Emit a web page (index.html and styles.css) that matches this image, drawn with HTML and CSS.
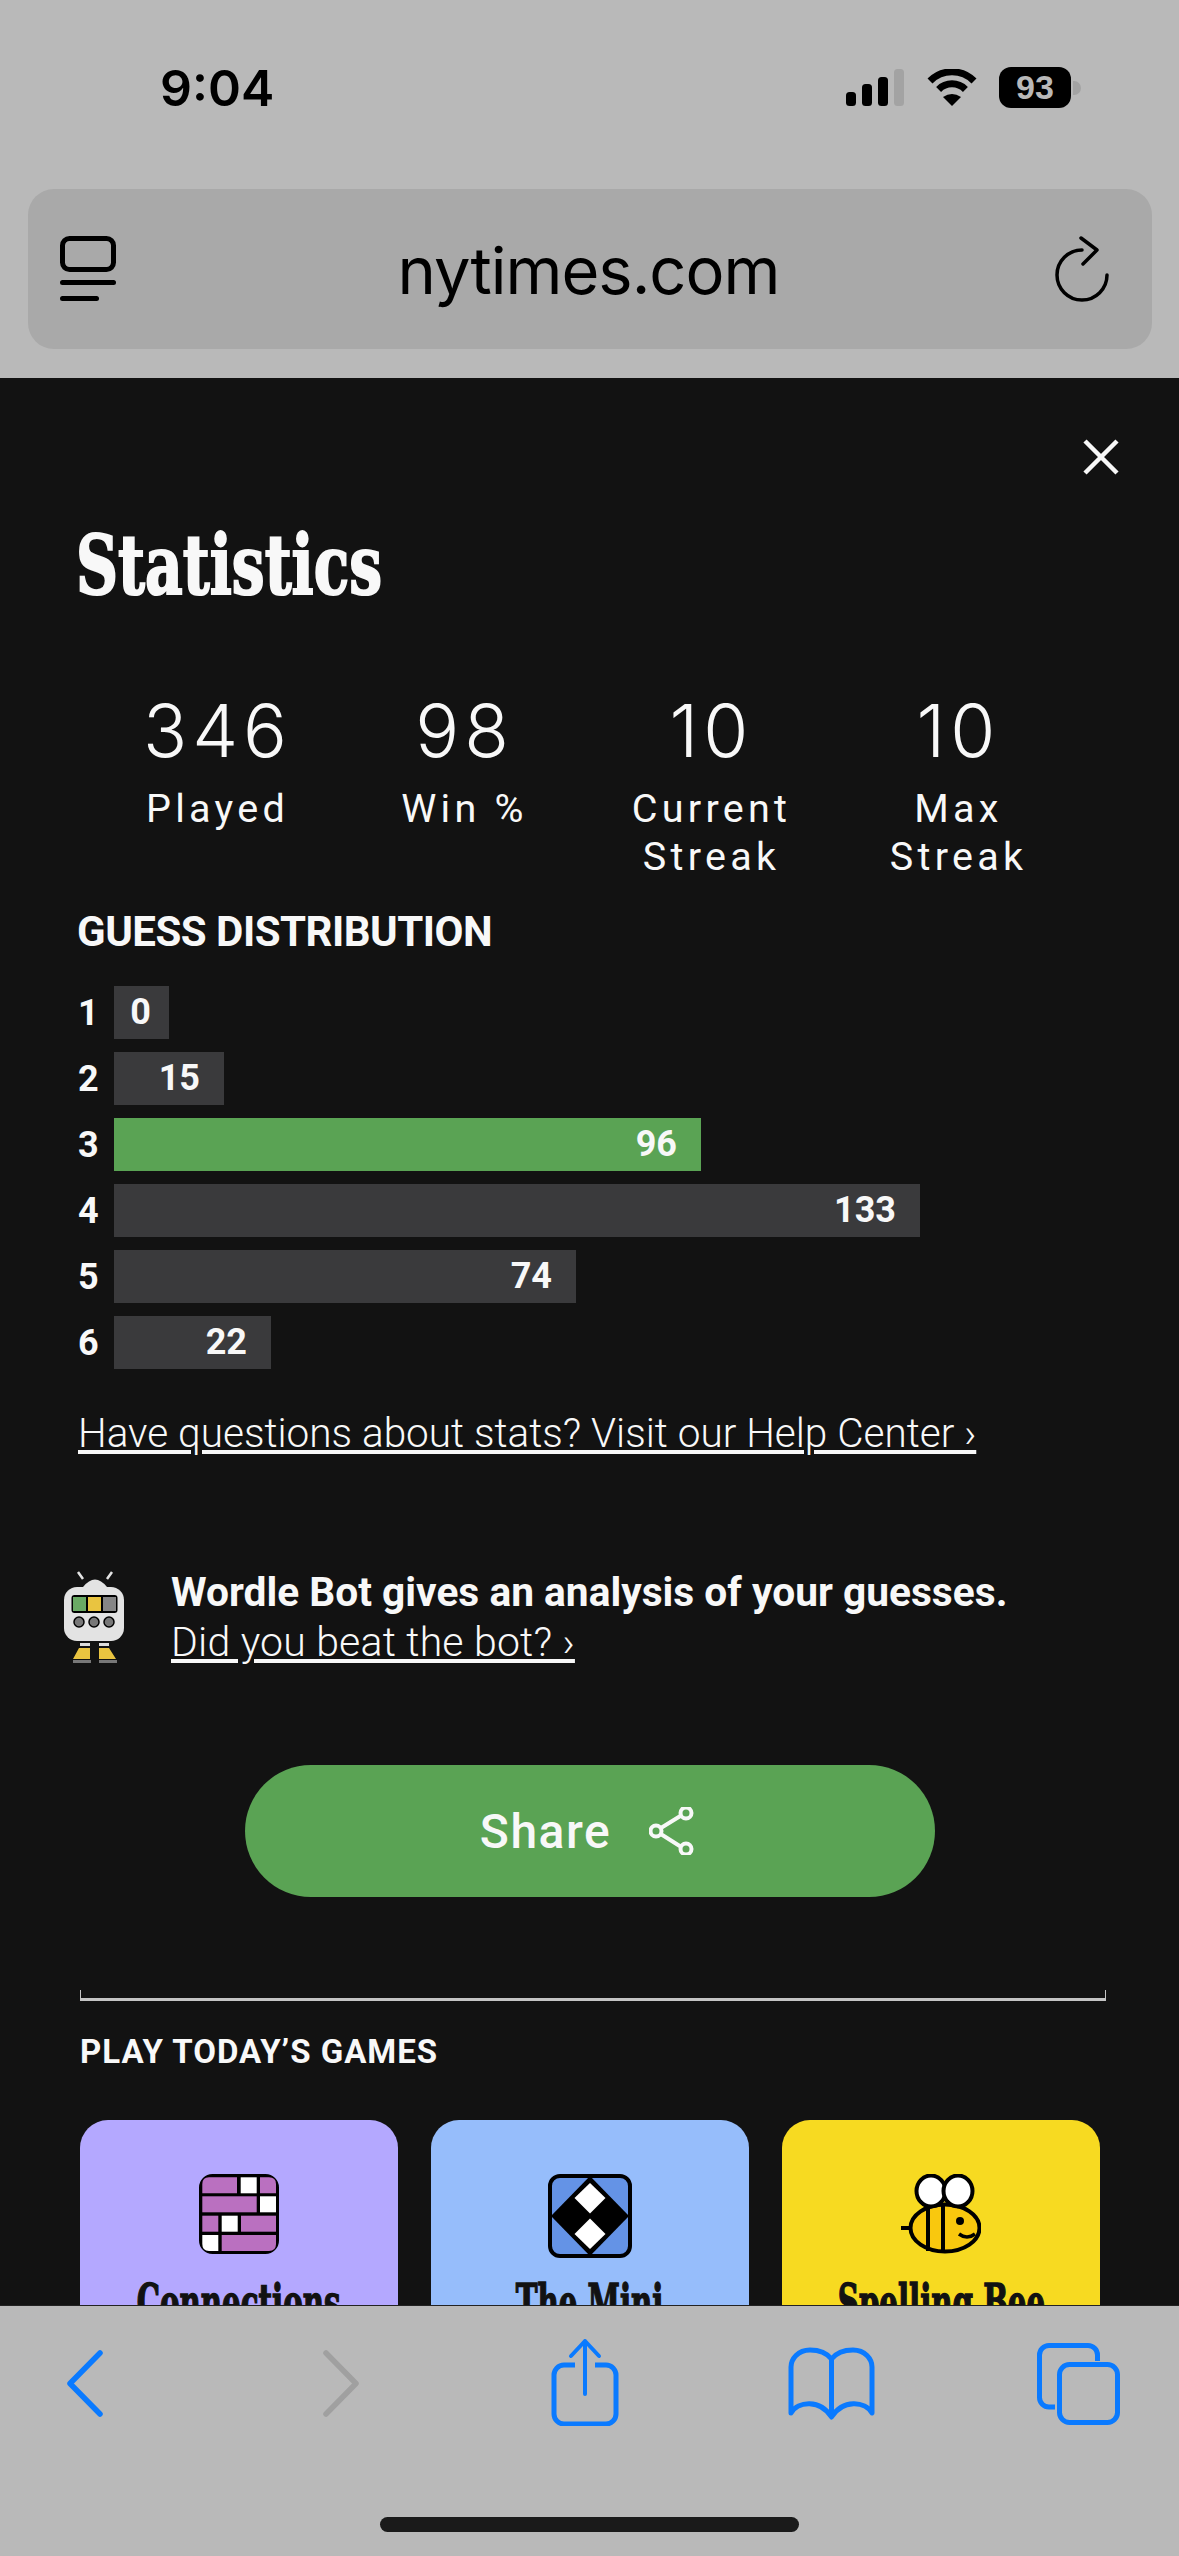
FILE: index.html
```html
<!DOCTYPE html>
<html lang="en">
<head>
  <meta charset="UTF-8" />
  <meta name="viewport" content="width=device-width, initial-scale=1.0"/>
  <title>Statistics</title>
  <link rel="stylesheet" href="styles.css">
</head>
<body>
  <div class="tela">
    <header class="topo">
      <div class="status">
        <span class="hora">9:04</span>
        <div class="status-icones">
          <svg width="58" height="37" viewBox="0 0 58 37">
            <rect x="0" y="23" width="10" height="14" rx="3.5" fill="#000"/>
            <rect x="16" y="15" width="10" height="22" rx="3.5" fill="#000"/>
            <rect x="32" y="8" width="10" height="29" rx="3.5" fill="#000"/>
            <rect x="48" y="0" width="10" height="37" rx="3.5" fill="#a3a3a3"/>
          </svg>
          <svg class="wifi" width="50" height="37" viewBox="0 0 50 37">
            <path d="M3 12 A31 31 0 0 1 47 12" fill="none" stroke="#000" stroke-width="7"/>
            <path d="M11.6 20.4 A19 19 0 0 1 38.4 20.4" fill="none" stroke="#000" stroke-width="7"/>
            <path d="M16 28 Q25 22 34 28 L25 37 Z" fill="#000"/>
          </svg>
          <div class="bateria">93</div>
          <div class="bateria-ponta"></div>
        </div>
      </div>
      <div class="barra-url">
        <svg width="56" height="66" viewBox="0 0 56 66">
          <rect x="2.5" y="2.5" width="51" height="31" rx="7" fill="none" stroke="#000" stroke-width="5"/>
          <rect x="0" y="44" width="56" height="5" rx="2.5" fill="#000"/>
          <rect x="0" y="60" width="39" height="5" rx="2.5" fill="#000"/>
        </svg>
        <span class="url">nytimes.com</span>
        <svg width="55" height="66" viewBox="0 0 55 66">
          <path d="M27 14 A25 25 0 1 0 52 39" fill="none" stroke="#000" stroke-width="3.5" stroke-linecap="round"/>
          <path d="M26 2 L42 14 L28 28" fill="none" stroke="#000" stroke-width="3.5" stroke-linecap="round" stroke-linejoin="round"/>
        </svg>
      </div>
    </header>

    <main class="conteudo">
      <div class="fechar-linha">
        <svg width="36" height="36" viewBox="0 0 36 36">
          <path d="M2 2 L34 34 M34 2 L2 34" stroke="#f8f8f8" stroke-width="4.5"/>
        </svg>
      </div>
      <h1 class="titulo">Statistics</h1>

      <div class="numeros">
        <div class="numero"><div class="valor">346</div><div class="rotulo">Played</div></div>
        <div class="numero"><div class="valor">98</div><div class="rotulo">Win %</div></div>
        <div class="numero"><div class="valor">10</div><div class="rotulo">Current<br>Streak</div></div>
        <div class="numero"><div class="valor">10</div><div class="rotulo">Max<br>Streak</div></div>
      </div>

      <h2 class="subtitulo">GUESS DISTRIBUTION</h2>
      <div class="grafico">
        <div class="linha"><span class="indice">1</span><div class="barra barra-zero" style="width:55px">0</div></div>
        <div class="linha"><span class="indice">2</span><div class="barra" style="width:110px">15</div></div>
        <div class="linha"><span class="indice">3</span><div class="barra verde" style="width:587px">96</div></div>
        <div class="linha"><span class="indice">4</span><div class="barra" style="width:806px">133</div></div>
        <div class="linha"><span class="indice">5</span><div class="barra" style="width:462px">74</div></div>
        <div class="linha"><span class="indice">6</span><div class="barra" style="width:157px">22</div></div>
      </div>

      <a class="ajuda" href="#">Have questions about stats? Visit our Help Center ›</a>

      <div class="bot">
        <svg class="bot-icone" width="66" height="93" viewBox="0 0 66 93">
          <path d="M16 1 L21 8 M50 1 L45 8" stroke="#e3e3e3" stroke-width="2.5"/>
          <path d="M21 16 Q33 1 45 16 Z" fill="#e3e3e3"/>
          <rect x="2" y="16" width="60" height="54" rx="13" fill="#e3e3e3"/>
          <rect x="9.5" y="24" width="46" height="18" rx="3" fill="#000"/>
          <rect x="11" y="26" width="13" height="14" fill="#6aaa64"/>
          <rect x="26" y="26" width="13" height="14" fill="#e9c440"/>
          <rect x="41" y="26" width="13" height="14" fill="#868686"/>
          <circle cx="17" cy="51" r="5" fill="#777" stroke="#000" stroke-width="1.5"/>
          <circle cx="32" cy="51" r="5" fill="#777" stroke="#000" stroke-width="1.5"/>
          <circle cx="47" cy="51" r="5" fill="#777" stroke="#000" stroke-width="1.5"/>
          <rect x="18" y="72" width="10" height="3" fill="#ddd"/>
          <rect x="37" y="72" width="10" height="3" fill="#ddd"/>
          <path d="M17 77 H28 V88 H11 Z M37 77 H47 L54 88 H37 Z" fill="#e9c440"/>
          <rect x="11" y="89" width="18" height="3" fill="#777"/>
          <rect x="37" y="89" width="18" height="3" fill="#777"/>
        </svg>
        <div class="bot-texto">
          <div class="bot-forte">Wordle Bot gives an analysis of your guesses.</div>
          <a class="bot-link" href="#">Did you beat the bot? ›</a>
        </div>
      </div>

      <button class="compartilhar">
        <span>Share</span>
        <svg width="45" height="48" viewBox="0 0 45 48">
          <path d="M37 5.5 L7 24 L37 43" fill="none" stroke="#f8f8f8" stroke-width="4"/>
          <circle cx="37" cy="6" r="5.5" fill="#5aa354" stroke="#f8f8f8" stroke-width="4"/>
          <circle cx="7" cy="24" r="5.5" fill="#5aa354" stroke="#f8f8f8" stroke-width="4"/>
          <circle cx="37" cy="42" r="5.5" fill="#5aa354" stroke="#f8f8f8" stroke-width="4"/>
        </svg>
      </button>

      <div class="divisor"></div>
      <h3 class="jogos-titulo">PLAY TODAY’S GAMES</h3>

      <div class="jogos">
        <div class="jogo roxo">
          <svg width="80" height="80" viewBox="0 0 80 80">
            <rect x="1.5" y="1.5" width="77" height="77" rx="12" fill="#000" stroke="#000" stroke-width="3"/>
            <path d="M10 3.3 H38 V19.3 H3.3 V10 Q3.3 3.3 10 3.3 Z" fill="#ba70c0"/>
            <rect x="41.7" y="3.3" width="16" height="16" fill="#fff"/>
            <path d="M61 3.3 H70 Q77 3.3 77 10 V19.3 H61 Z" fill="#ba70c0"/>
            <rect x="3.3" y="22.3" width="54.4" height="16" fill="#ba70c0"/>
            <rect x="61" y="22.3" width="16" height="16" fill="#fff"/>
            <rect x="3.3" y="41.7" width="16" height="16" fill="#ba70c0"/>
            <rect x="22.7" y="41.7" width="16" height="16" fill="#fff"/>
            <rect x="42" y="41.7" width="35" height="16" fill="#ba70c0"/>
            <path d="M3.3 61 H19.3 V77 H10 Q3.3 77 3.3 70 Z" fill="#fff"/>
            <path d="M22.7 61 H77 V70 Q77 77 70 77 H22.7 Z" fill="#ba70c0"/>
          </svg>
          <div class="jogo-nome">Connections</div>
        </div>
        <div class="jogo azul">
          <svg width="84" height="84" viewBox="0 0 84 84">
            <rect x="2" y="2" width="80" height="80" rx="10" fill="#6493e6" stroke="#000" stroke-width="4"/>
            <path d="M42 2 L81 42 L42 82 L3 42 Z" fill="#000"/>
            <path d="M42 9 L57.5 24 L42 39.5 L26.5 24 Z" fill="#fff"/>
            <path d="M42 44.5 L57.5 60 L42 75 L26.5 60 Z" fill="#fff"/>
          </svg>
          <div class="jogo-nome nome-mini">The Mini</div>
        </div>
        <div class="jogo amarelo">
          <svg width="80" height="80" viewBox="0 0 80 80">
            <path d="M0 54 H9" stroke="#000" stroke-width="4"/>
            <ellipse cx="44" cy="54" rx="34.5" ry="23.5" fill="#f9c80e" stroke="#000" stroke-width="4"/>
            <path d="M27 32 V77 M42 32 V77" stroke="#000" stroke-width="4"/>
            <ellipse cx="30" cy="17" rx="14.5" ry="15.5" fill="#fff" stroke="#000" stroke-width="4"/>
            <ellipse cx="57" cy="17" rx="14.5" ry="15.5" fill="#fff" stroke="#000" stroke-width="4"/>
            <circle cx="59" cy="47" r="4" fill="#000"/>
            <path d="M58 60 Q66 66 74 60" fill="none" stroke="#000" stroke-width="3.5"/>
          </svg>
          <div class="jogo-nome">Spelling Bee</div>
        </div>
      </div>
    </main>

    <footer class="rodape">
      <div class="ferramentas">
        <svg class="ic-voltar" width="37" height="67" viewBox="0 0 37 67">
          <path d="M34 3 L4 33.5 L34 64" fill="none" stroke="#0a7aff" stroke-width="5.5" stroke-linecap="round" stroke-linejoin="round"/>
        </svg>
        <svg class="ic-avancar" width="37" height="67" viewBox="0 0 37 67">
          <path d="M3 3 L33 33.5 L3 64" fill="none" stroke="#a0a0a0" stroke-width="5.5" stroke-linecap="round" stroke-linejoin="round"/>
        </svg>
        <svg class="ic-enviar" width="70" height="88" viewBox="0 0 70 88">
          <path d="M25 27 H14 A10 10 0 0 0 4 37 V76 A10 10 0 0 0 14 86 H56 A10 10 0 0 0 66 76 V37 A10 10 0 0 0 56 27 H45" fill="none" stroke="#0a7aff" stroke-width="5"/>
          <path d="M35 3 V56 M21 18 L35 3 L49 18" fill="none" stroke="#0a7aff" stroke-width="4" stroke-linecap="round" stroke-linejoin="round"/>
        </svg>
        <svg class="ic-livro" width="87" height="73" viewBox="0 0 87 73">
          <path d="M43.5 12 C38 5 30 3 22 3 C10 3 3 12 3 20 V66 C10 54 32 52 43.5 70 C55 52 77 54 84 66 V20 C84 12 77 3 65 3 C57 3 49 5 43.5 12 Z M43.5 12 V70" fill="none" stroke="#0a7aff" stroke-width="5" stroke-linejoin="round"/>
        </svg>
        <svg class="ic-abas" width="83" height="82" viewBox="0 0 83 82">
          <path d="M18 64 H12 A9.5 9.5 0 0 1 2.5 54.5 V12 A9.5 9.5 0 0 1 12 2.5 H51 A9.5 9.5 0 0 1 60.5 12 V18" fill="none" stroke="#0a7aff" stroke-width="5"/>
          <rect x="22.5" y="21.5" width="58" height="58" rx="10" fill="none" stroke="#0a7aff" stroke-width="5"/>
        </svg>
      </div>
      <div class="home"></div>
    </footer>
  </div>
</body>
</html>
```

FILE: styles.css
```css
* {
  box-sizing: border-box;
}
body {
  margin: 0;
  background: #121212;
  font-family: "Liberation Sans", Arial, sans-serif;
}
.tela {
  width: 1179px;
  height: 2556px;
  display: flex;
  flex-direction: column;
  overflow: hidden;
}

/* topo do navegador */
.topo {
  height: 378px;
  background: #b9b9b9;
  padding-top: 67px;
}
.status {
  display: flex;
  justify-content: space-between;
  align-items: center;
  height: 41px;
  padding: 0 98px 0 160px;
}
.hora {
  font-family: Inter, sans-serif;
  font-size: 50px;
  font-weight: 600;
  color: #000;
}
.status-icones {
  display: flex;
  align-items: center;
}
.wifi {
  margin: 0 22px 0 23px;
}
.bateria {
  width: 72px;
  height: 41px;
  background: #000;
  border-radius: 12px;
  color: #b9b9b9;
  font-size: 34px;
  font-weight: bold;
  line-height: 41px;
  text-align: center;
}
.bateria-ponta {
  width: 8px;
  height: 14px;
  margin-left: 2px;
  background: #a3a3a3;
  border-radius: 0 8px 8px 0;
}
.barra-url {
  display: flex;
  justify-content: space-between;
  align-items: center;
  height: 160px;
  margin: 81px 27px 0 28px;
  padding: 0 42px 0 32px;
  background: #a9a9a9;
  border-radius: 26px;
}
.url {
  margin: 2px 0 0 6px;
  font-family: Inter, sans-serif;
  font-size: 65px;
  letter-spacing: -1px;
  color: #000;
}

/* conteudo */
.conteudo {
  flex: 1;
  overflow: hidden;
  padding: 61px 60px 0 78px;
  background: #121212;
  color: #f8f8f8;
}
.fechar-linha {
  display: flex;
  justify-content: flex-end;
}
.titulo {
  margin: 45px 0 0 -2px;
  font-family: "DejaVu Serif Condensed", "DejaVu Serif", serif;
  font-size: 82px;
  line-height: 90px;
  font-weight: bold;
  -webkit-text-stroke: 2px #f8f8f8;
  transform: scaleX(0.79);
  transform-origin: left;
}
.numeros {
  display: grid;
  grid-template-columns: repeat(4, 247px);
  margin: 80px 0 0 16px;
}
.numero {
  text-align: center;
}
.valor {
  font-family: Inter, sans-serif;
  font-weight: 300;
  font-size: 73px;
  line-height: 82px;
  letter-spacing: 5px;
}
.rotulo {
  margin-top: 13px;
  font-family: Roboto, sans-serif;
  font-weight: 400;
  font-size: 39.5px;
  line-height: 48px;
  letter-spacing: 4.3px;
}
.subtitulo {
  margin: 27px 0 0 -1px;
  font-size: 42px;
  line-height: 48px;
  font-family: Roboto, sans-serif;
  font-weight: bold;
  letter-spacing: -0.5px;
}
.grafico {
  display: flex;
  flex-direction: column;
  gap: 13px;
  margin-top: 30px;
}
.linha {
  display: flex;
  align-items: center;
  height: 53px;
}
.indice {
  width: 36px;
  font-family: Roboto, sans-serif;
  font-size: 36px;
  font-weight: bold;
}
.barra {
  height: 53px;
  padding-right: 24px;
  background: #3a3a3c;
  font-family: Roboto, sans-serif;
  font-size: 36px;
  font-weight: bold;
  line-height: 53px;
  text-align: right;
}
.barra-zero {
  padding-right: 18px;
}
.verde {
  background: #5aa354;
}
.ajuda {
  display: inline-block;
  margin-top: 40px;
  color: #f8f8f8;
  font-family: Roboto, sans-serif;
  font-weight: 300;
  font-size: 40.5px;
  line-height: 48px;
}
.bot {
  display: flex;
  margin: 114px 0 0 -16px;
}
.bot-icone {
  flex-shrink: 0;
}
.bot-texto {
  margin: -4px 0 0 43px;
}
.bot-forte {
  font-family: Roboto, sans-serif;
  font-size: 40.7px;
  font-weight: bold;
  line-height: 50px;
}
.bot-link {
  color: #f8f8f8;
  font-family: Roboto, sans-serif;
  font-weight: 300;
  font-size: 41px;
  line-height: 50px;
  letter-spacing: 0.2px;
}
.compartilhar {
  display: flex;
  justify-content: center;
  align-items: center;
  gap: 38px;
  width: 690px;
  height: 132px;
  margin: 98px 0 0 167px;
  padding: 0 6px 0 0;
  background: #5aa354;
  border: none;
  border-radius: 66px;
  color: #f8f8f8;
  font-family: Roboto, sans-serif;
  font-size: 48px;
  font-weight: 500;
  letter-spacing: 1.5px;
}
.divisor {
  width: 1026px;
  height: 11px;
  margin: 93px 0 0 2px;
  border: solid #c4c4c4;
  border-width: 0 1px 3px 1px;
}
.jogos-titulo {
  margin: 32px 0 0 2px;
  font-family: Roboto, sans-serif;
  font-size: 33px;
  line-height: 38px;
  font-weight: bold;
  letter-spacing: 1px;
}
.jogos {
  display: grid;
  grid-template-columns: repeat(3, 318px);
  gap: 33px;
  margin: 49px 0 0 2px;
}
.jogo {
  display: flex;
  flex-direction: column;
  align-items: center;
  height: 300px;
  padding-top: 54px;
  border-radius: 28px;
  color: #121212;
}
.roxo {
  background: #b4a8ff;
}
.azul {
  background: #96bdfb;
}
.amarelo {
  background: #f7da21;
}
.jogo-nome {
  margin-top: 24px;
  font-family: "DejaVu Serif Condensed", "DejaVu Serif", serif;
  font-size: 50px;
  line-height: 50px;
  font-weight: bold;
  white-space: nowrap;
  -webkit-text-stroke: 1.5px #121212;
  transform: scaleX(0.65);
}
.nome-mini {
  margin-top: 20px;
}

/* barra de baixo */
.rodape {
  height: 251px;
  background: #b9b9b9;
  border-top: 1px solid #222;
}
.ferramentas {
  display: flex;
  align-items: flex-start;
  height: 211px;
}
.ic-voltar {
  margin: 44px 0 0 66px;
}
.ic-avancar {
  margin: 44px 0 0 220px;
}
.ic-enviar {
  margin: 32px 0 0 190px;
}
.ic-livro {
  margin: 41px 0 0 168px;
}
.ic-abas {
  margin: 37px 0 0 162px;
}
.home {
  width: 419px;
  height: 15px;
  margin-left: 380px;
  background: #1a1a1a;
  border-radius: 8px;
}
```
